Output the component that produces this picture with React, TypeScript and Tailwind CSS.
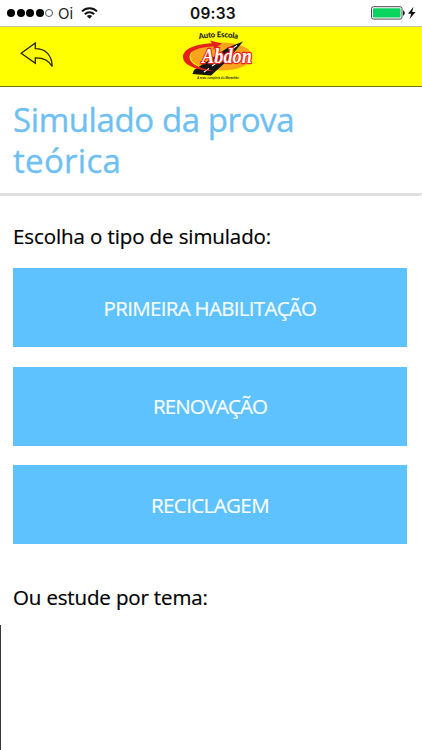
import React from "react";

const examTypes = [
  { label: "PRIMEIRA HABILITAÇÃO", spacing: "tracking-[-0.7px]" },
  { label: "RENOVAÇÃO", spacing: "tracking-[-0.95px]" },
  { label: "RECICLAGEM", spacing: "tracking-[-0.6px]" },
];

const StatusBar: React.FC = () => (
  <div className="grid h-[26px] grid-cols-3 items-center bg-white pl-[7px] pr-[6px] font-['Inter',sans-serif]">
    <div className="flex items-center">
      <div className="flex gap-[1.5px]">
        {[1, 2, 3, 4].map((dot) => (
          <span key={dot} className="h-[8px] w-[8px] rounded-full bg-black" />
        ))}
        <span className="h-[8px] w-[8px] rounded-full border border-gray-600" />
      </div>
      <span className="ml-[5px] pt-px text-[15px] leading-5 text-[#222]">Oi</span>
      <svg className="ml-[8px] h-[12px] w-[17px]" viewBox="0 0 17 12">
        <g fill="none" stroke="#111" strokeWidth="2">
          <path d="M1 4.4 C5.2 0.2 11.8 0.2 16 4.4" />
          <path d="M3.8 7.2 C6.5 4.6 10.5 4.6 13.2 7.2" />
        </g>
        <path d="M5.8 9 C7.3 7.6 9.7 7.6 11.2 9 L8.5 11.7 Z" fill="#111" />
      </svg>
    </div>
    <div className="pl-[3px] pt-[2px] text-center text-[15.5px] font-semibold leading-5 tracking-[0.2px] text-[#111]">
      09:33
    </div>
    <div className="flex items-center justify-end">
      <svg className="h-[14px] w-[45px]" viewBox="0 0 45 14">
        <rect x="0.5" y="0.7" width="30.5" height="12.4" rx="2" fill="#fff" stroke="#4a4a4a" />
        <rect x="2" y="2.2" width="27.5" height="9.4" rx="0.8" fill="#0bd35f" />
        <path d="M32 4.5 C34.4 5 34.4 9 32 9.5 Z" fill="#222" />
        <path d="M42.4 0.8 L37 7.8 H40.3 L38.6 13 L44.6 6 H41.2 Z" fill="#111" />
      </svg>
    </div>
  </div>
);

const Logo: React.FC = () => (
  <svg className="h-[58px] w-[80px]" viewBox="0 0 80 58">
    <defs>
      <path id="arc" d="M22 11.4 Q41 7 63 11.4" />
    </defs>
    <ellipse cx="44.5" cy="28.5" rx="31" ry="14" fill="#f8a51b" />
    <path d="M66 13.5 L51 19.5 L17 42 L15.5 46 L34 47.5 L50 33 Z" fill="#151515" />
    <path d="M60 17.5 L52 23 M40 34.5 L35 38 M32 40.5 L27 44" stroke="#fff" strokeWidth="1.1" />
    <path
      d="M45 15.5 L33 12.5 L35 15.3 C17 16 6 21.5 6 29 C6 37.5 20 42.5 38 43.2 C22 40.5 12.5 35.5 12.5 29 C12.5 22.5 22 19.2 37 18.6 L36 21.5 Z"
      fill="#e4221b"
    />
    <text
      x="25"
      y="34.5"
      fontFamily="Liberation Serif, serif"
      fontSize="21"
      fontWeight="700"
      fontStyle="italic"
      fill="#fff"
      stroke="#e4221b"
      strokeWidth="2.4"
      paintOrder="stroke"
      strokeLinejoin="round"
      textLength="50"
      lengthAdjust="spacingAndGlyphs"
    >
      Abdon
    </text>
    <text fontFamily="Lato, sans-serif" fontSize="7.8" fontWeight="900" fill="#222">
      <textPath href="#arc" textLength="39">
        Auto Escola
      </textPath>
    </text>
    <text
      x="20"
      y="50.8"
      fontFamily="Liberation Sans, sans-serif"
      fontSize="3.4"
      fontWeight="700"
      fontStyle="italic"
      fill="#333"
      textLength="42"
      lengthAdjust="spacingAndGlyphs"
    >
      A mais completa do Maranhão
    </text>
  </svg>
);

const Header: React.FC = () => (
  <header className="grid h-[61px] grid-cols-3 items-center border-b border-t border-b-[#77770c] border-t-[#c4c49a] bg-[#ffff00]">
    <button className="pb-[3px] pl-[20px]" aria-label="Voltar">
      <svg className="h-[26px] w-[34px]" viewBox="0 0 34 26">
        <path
          d="M1.2 11.3 L15.3 1 V6.7 C25 6.7 32 12.5 32.2 24.5 C29 18.5 23.5 15.6 15.3 15.8 V21.3 Z"
          fill="none"
          stroke="#222200"
          strokeWidth="1.3"
        />
      </svg>
    </button>
    <div className="flex justify-center pl-[12px]">
      <Logo />
    </div>
  </header>
);

export default function App() {
  return (
    <div className="h-[750px] w-[422px] overflow-hidden bg-white font-['Open_Sans','Noto_Sans',sans-serif] text-black">
      <StatusBar />
      <Header />

      <div className="h-[109px] rounded-br-[3px] border-b-[3px] border-[#e0e0e0] px-[13px] pt-[12px]">
        <h1 className="text-[33px] leading-[41px] text-[#6ec0f2] [-webkit-text-stroke:0.35px_#6ec0f2]">
          <span className="block tracking-[-0.4px]">Simulado da prova</span>
          <span className="block tracking-[0.3px]">teórica</span>
        </h1>
      </div>

      <main className="px-[13px] pt-[26px]">
        <h2 className="text-[20.5px] leading-[28px] tracking-[-0.1px] [-webkit-text-stroke:0.2px_#000]">
          Escolha o tipo de simulado:
        </h2>
        <div className="mt-[18px] flex flex-col gap-[19.7px] pr-[2px]">
          {examTypes.map((type) => (
            <button
              key={type.label}
              className={`h-[79px] bg-[#5ec2ff] text-[20.5px] leading-[28px] text-[#f8fdff] [-webkit-text-stroke:0.2px_#f8fdff] ${type.spacing}`}
            >
              {type.label}
            </button>
          ))}
        </div>
        <h2 className="mt-[39px] text-[20.5px] leading-[28px] tracking-[-0.15px] [-webkit-text-stroke:0.2px_#000]">
          Ou estude por tema:
        </h2>
      </main>

      {/* Edge of the topics panel */}
      <div className="mt-[14px] h-[130px] w-px bg-[#383834]" />
    </div>
  );
}
